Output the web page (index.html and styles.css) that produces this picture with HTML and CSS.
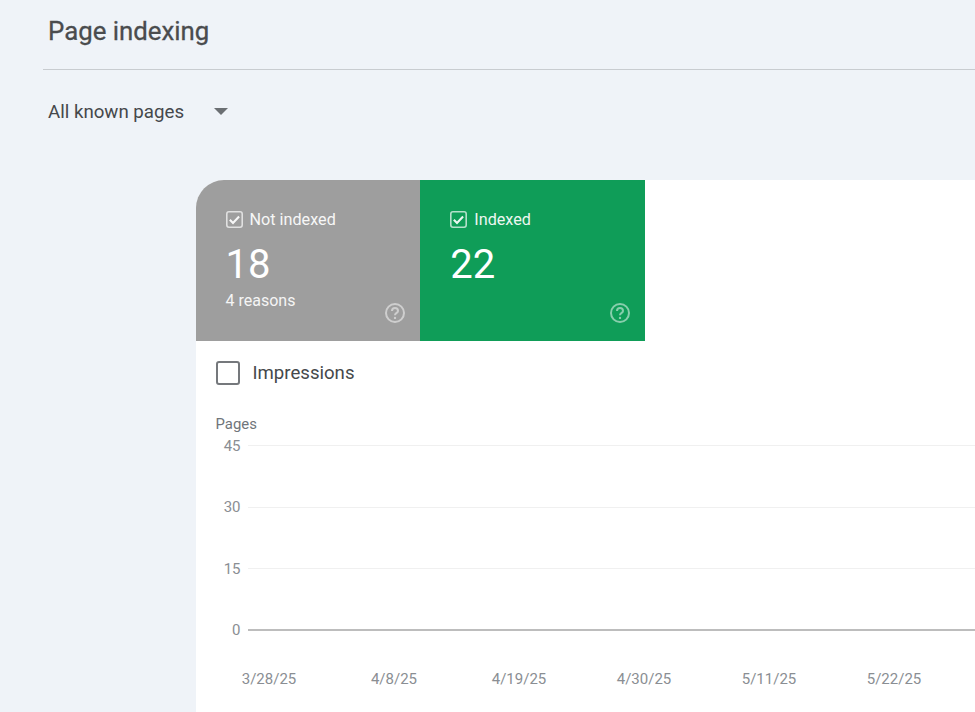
FILE: index.html
```html
<!DOCTYPE html>
<html lang="en">
<head>
<meta charset="utf-8">
<title>Page indexing</title>
<link rel="stylesheet" href="styles.css">
</head>
<body>
<div class="page">
  <header class="head"><h1 class="title">Page indexing</h1></header>
  <div class="filter">
    <span class="filter-label">All known pages</span>
    <span class="caret"></span>
  </div>
  <main class="card">
    <div class="tiles">
      <section class="tile tile-grey">
        <div class="tile-label">
          <svg class="check" viewBox="0 0 16 16"><rect x="0.75" y="0.75" width="14.5" height="14.5" rx="2" fill="none" stroke="currentColor" stroke-opacity=".75" stroke-width="1.5"/><path d="M3.6 8.2l3 3 5.7-6" fill="none" stroke="currentColor" stroke-width="2"/></svg>
          <span>Not indexed</span>
        </div>
        <div class="tile-num">18</div>
        <div class="tile-sub">4 reasons</div>
        <svg class="help" viewBox="0 0 20 20"><circle cx="10" cy="10" r="9" fill="none" stroke="currentColor" stroke-width="2"/><path d="M7 7.9a3 3 0 0 1 6 0c0 1.9-3 2-3 4.3" fill="none" stroke="currentColor" stroke-width="2"/><circle cx="10" cy="14.9" r="1.2" fill="currentColor"/></svg>
      </section>
      <section class="tile tile-green">
        <div class="tile-label">
          <svg class="check" viewBox="0 0 16 16"><rect x="0.75" y="0.75" width="14.5" height="14.5" rx="2" fill="none" stroke="currentColor" stroke-opacity=".75" stroke-width="1.5"/><path d="M3.6 8.2l3 3 5.7-6" fill="none" stroke="currentColor" stroke-width="2"/></svg>
          <span>Indexed</span>
        </div>
        <div class="tile-num">22</div>
        <svg class="help" viewBox="0 0 20 20"><circle cx="10" cy="10" r="9" fill="none" stroke="currentColor" stroke-width="2"/><path d="M7 7.9a3 3 0 0 1 6 0c0 1.9-3 2-3 4.3" fill="none" stroke="currentColor" stroke-width="2"/><circle cx="10" cy="14.9" r="1.2" fill="currentColor"/></svg>
      </section>
    </div>
    <div class="metric">
      <span class="box"></span>
      <span class="metric-label">Impressions</span>
    </div>
    <div class="chart">
      <div class="axis-title">Pages</div>
      <div class="rows">
        <div class="row"><span class="tick">45</span><span class="line"></span></div>
        <div class="row"><span class="tick">30</span><span class="line"></span></div>
        <div class="row"><span class="tick">15</span><span class="line"></span></div>
        <div class="row"><span class="tick">0</span><span class="line line-base"></span></div>
      </div>
      <div class="dates">
        <span class="date">3/28/25</span>
        <span class="date">4/8/25</span>
        <span class="date">4/19/25</span>
        <span class="date">4/30/25</span>
        <span class="date">5/11/25</span>
        <span class="date">5/22/25</span>
      </div>
    </div>
  </main>
</div>
</body>
</html>
```

FILE: styles.css
```css
* { box-sizing: border-box; }
html, body { margin: 0; height: 100%; overflow: hidden; }
body { background: #eff3f8; font-family: Roboto, "Liberation Sans", sans-serif; color: #3c4043; }
.page { width: 975px; height: 712px; overflow: hidden; padding-left: 43px; }
.head { height: 70px; border-bottom: 1px solid #c8ccd0; padding: 17px 0 0 5px; }
.title { margin: 0; font-size: 25.8px; line-height: 28px; font-weight: 400; color: #4a4c4e; -webkit-text-stroke: .3px #4a4c4e; }
.filter { display: flex; align-items: center; height: 24px; margin: 30px 0 0 5px; font-size: 18.7px; }
.filter-label { color: #45484b; width: 166px; }
.caret { width: 0; height: 0; border-left: 7px solid transparent; border-right: 7px solid transparent; border-top: 7px solid #6b6f73; position: relative; top: -1px; }
.card { width: 780px; height: 532px; margin: 56px 0 0 152.5px; background: #fff; border-top-left-radius: 28px; overflow: hidden; }
.tiles { display: flex; height: 161px; }
.tile { position: relative; width: 224.8px; padding: 28px 0 0 30px; color: #fff; }
.tile-grey { background: #9e9e9e; }
.tile-green { background: #0f9d58; }
.tile-label { display: flex; align-items: center; gap: 7px; height: 22px; font-size: 16.2px; opacity: .92; }
.check { width: 17px; height: 17px; flex: none; }
.tile-num { font-size: 40px; line-height: 48px; margin-top: 11px; }
.tile-sub { font-size: 16px; line-height: 20px; margin-top: 2px; opacity: .9; }
.help { position: absolute; right: 15.5px; bottom: 18px; width: 20px; height: 20px; color: #fff; opacity: .5; }
.metric { display: flex; align-items: center; gap: 13px; height: 24px; margin: 20px 0 0 20px; }
.box { width: 24px; height: 24px; border: 2px solid #75787c; border-radius: 3px; }
.metric-label { font-size: 18.6px; color: #45484b; }
.chart { padding: 0 0 0 20px; }
.axis-title { font-size: 14.9px; line-height: 16px; margin-top: 31px; color: #70757a; }
.rows { display: flex; flex-direction: column; margin-top: -17px; }
.row { display: flex; align-items: center; height: 61.5px; }
.tick { width: 25px; text-align: right; font-size: 15px; color: #8a8e93; }
.line { flex: 1; height: 1px; margin-left: 7px; background: #f0f0f0; }
.line-base { height: 2px; background: #bdbdbd; }
.dates { display: flex; margin-top: 9px; margin-left: -9px; }
.date { width: 125px; text-align: center; font-size: 15px; color: #8a8e93; flex: none; }
```
